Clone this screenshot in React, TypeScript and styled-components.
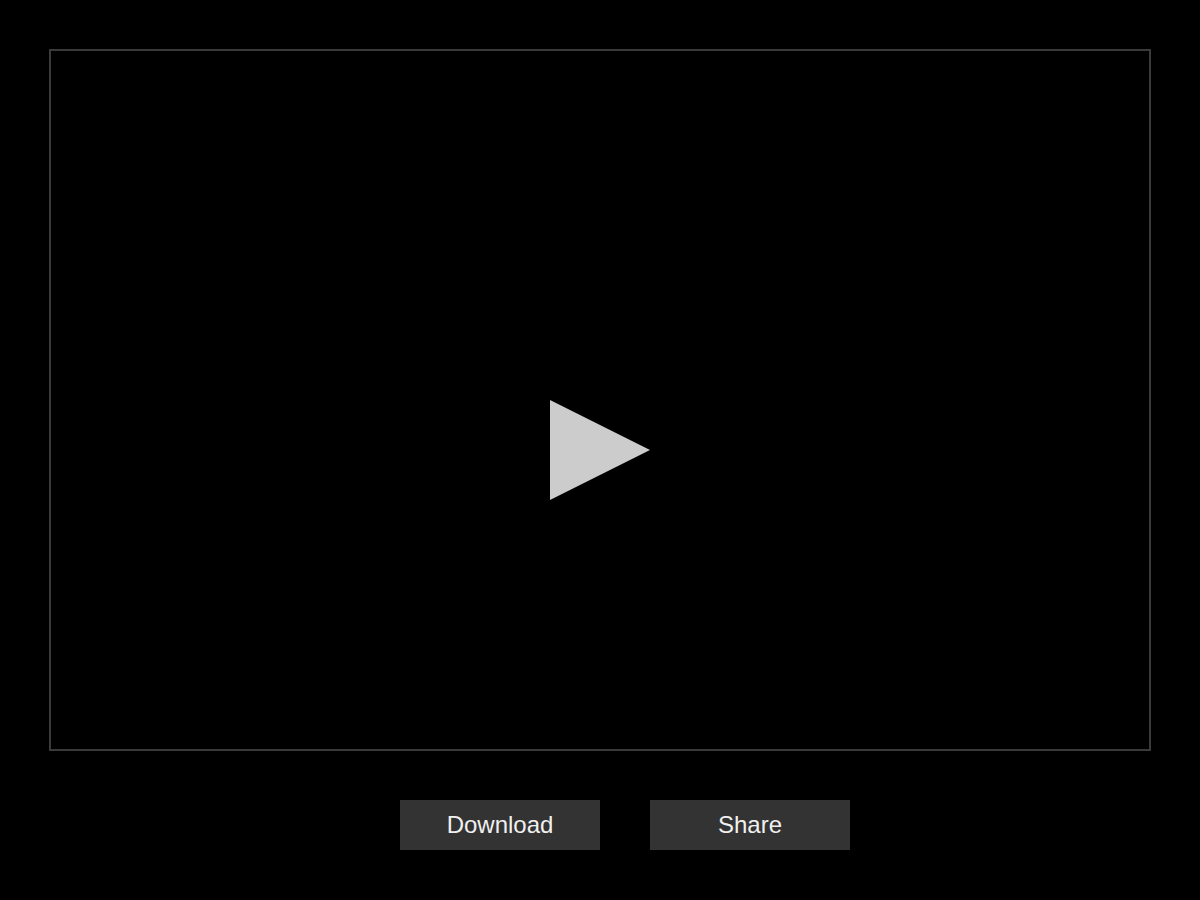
import React from "react"
import styled, { createGlobalStyle } from "styled-components"

const GlobalStyle = createGlobalStyle`
  html, body {
    margin: 0;
    padding: 0;
    background: #000;
  }
  body {
    font-family: "Liberation Sans", Arial, sans-serif;
  }
`

const Page = styled.div`
  width: 1200px;
  height: 900px;
  box-sizing: border-box;
  padding: 49px;
  background: #000;
`

const Frame = styled.div`
  width: 1102px;
  height: 702px;
  box-sizing: border-box;
  border: 2px solid #3a3a3a;
  display: flex;
  justify-content: center;
  align-items: flex-start;
  padding-top: 349px;
`

const PlayIcon = styled.svg`
  display: block;
  width: 100px;
  height: 100px;
`

const Controls = styled.div`
  display: flex;
  gap: 50px;
  margin-top: 49px;
  padding-left: 351px;
`

const Button = styled.button`
  width: 200px;
  height: 50px;
  border: 0;
  padding: 0;
  background: #333;
  color: #f0f0f0;
  font-family: "Liberation Sans", Arial, sans-serif;
  font-size: 24px;
  cursor: pointer;
`

const App: React.FC = () => {
  return (
    <>
      <GlobalStyle />
      <Page>
        <Frame>
          <PlayIcon viewBox="0 0 100 100">
            <polygon points="0,0 100,50 0,100" fill="#cccccc" />
          </PlayIcon>
        </Frame>
        <Controls>
          <Button>Download</Button>
          <Button>Share</Button>
        </Controls>
      </Page>
    </>
  )
}

export default App
